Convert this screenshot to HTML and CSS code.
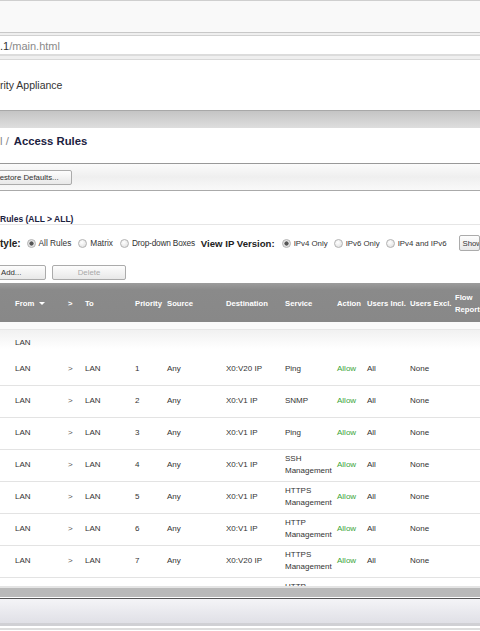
FILE: index.html
```html
<!DOCTYPE html>
<html lang="en">
<head>
    <meta charset="UTF-8">
    <meta name="viewport" content="width=device-width, initial-scale=1.0">
    <title>Access Rules</title>
    <link rel="stylesheet" href="styles.css">
</head>
<body>
    <div class="chrome"></div>
    <div class="address">
        <div class="url"><span class="host">.1</span>/main.html</div>
    </div>

    <div class="brand">rity Appliance</div>
    <div class="nav"></div>

    <div class="title"><span class="crumb">l /</span>Access Rules</div>

    <div class="toolbar">
        <button class="btn restore">Restore Defaults...</button>
    </div>

    <div class="section-head">Rules (ALL &gt; ALL)</div>

    <div class="view-row">
        <span class="view-label">tyle:</span>
        <label class="opt"><input type="radio" name="style" checked> All Rules</label>
        <label class="opt"><input type="radio" name="style"> Matrix</label>
        <label class="opt tight"><input type="radio" name="style"> Drop-down Boxes</label>
        <span class="view-label ip">View IP Version:</span>
        <label class="opt ipv"><input type="radio" name="ipv" checked> IPv4 Only</label>
        <label class="opt ipv"><input type="radio" name="ipv"> IPv6 Only</label>
        <label class="opt ipv"><input type="radio" name="ipv"> IPv4 and IPv6</label>
        <button class="btn show">Show Rules</button>
    </div>

    <div class="actions">
        <button class="btn add">Add...</button>
        <button class="btn delete" disabled>Delete</button>
    </div>

    <div class="tablewrap">
        <table class="rules">
            <colgroup>
                <col style="width:68px"><col style="width:17px"><col style="width:50px">
                <col style="width:32px"><col style="width:59px"><col style="width:59px">
                <col style="width:52px"><col style="width:30px"><col style="width:43px">
                <col style="width:45px"><col style="width:40px">
            </colgroup>
            <thead>
                <tr>
                    <th>From <span class="sort"></span></th>
                    <th>&gt;</th>
                    <th>To</th>
                    <th>Priority</th>
                    <th>Source</th>
                    <th>Destination</th>
                    <th>Service</th>
                    <th>Action</th>
                    <th>Users Incl.</th>
                    <th>Users Excl.</th>
                    <th>Flow<br>Report</th>
                </tr>
            </thead>
            <tbody>
                <tr class="group"><td colspan="11">LAN</td></tr>
                <tr><td>LAN</td><td class="arrow">&gt;</td><td>LAN</td><td>1</td><td>Any</td><td>X0:V20 IP</td><td>Ping</td><td class="allow">Allow</td><td>All</td><td>None</td><td></td></tr>
                <tr><td>LAN</td><td class="arrow">&gt;</td><td>LAN</td><td>2</td><td>Any</td><td>X0:V1 IP</td><td>SNMP</td><td class="allow">Allow</td><td>All</td><td>None</td><td></td></tr>
                <tr><td>LAN</td><td class="arrow">&gt;</td><td>LAN</td><td>3</td><td>Any</td><td>X0:V1 IP</td><td>Ping</td><td class="allow">Allow</td><td>All</td><td>None</td><td></td></tr>
                <tr><td>LAN</td><td class="arrow">&gt;</td><td>LAN</td><td>4</td><td>Any</td><td>X0:V1 IP</td><td>SSH<br>Management</td><td class="allow">Allow</td><td>All</td><td>None</td><td></td></tr>
                <tr><td>LAN</td><td class="arrow">&gt;</td><td>LAN</td><td>5</td><td>Any</td><td>X0:V1 IP</td><td>HTTPS<br>Management</td><td class="allow">Allow</td><td>All</td><td>None</td><td></td></tr>
                <tr><td>LAN</td><td class="arrow">&gt;</td><td>LAN</td><td>6</td><td>Any</td><td>X0:V1 IP</td><td>HTTP<br>Management</td><td class="allow">Allow</td><td>All</td><td>None</td><td></td></tr>
                <tr><td>LAN</td><td class="arrow">&gt;</td><td>LAN</td><td>7</td><td>Any</td><td>X0:V20 IP</td><td>HTTPS<br>Management</td><td class="allow">Allow</td><td>All</td><td>None</td><td></td></tr>
                <tr><td>LAN</td><td class="arrow">&gt;</td><td>LAN</td><td>8</td><td>Any</td><td>X0:V20 IP</td><td>HTTP<br>Management</td><td class="allow">Allow</td><td>All</td><td>None</td><td></td></tr>
            </tbody>
        </table>
    </div>

    <div class="hscroll"></div>
    <div class="footer"></div>
    <div class="footer-end"></div>
</body>
</html>
```

FILE: styles.css
```css
* {
    box-sizing: border-box;
}
body {
    margin: 0;
    width: 480px;
    height: 631px;
    overflow: hidden;
    font-family: "Liberation Sans", Arial, sans-serif;
    color: #333;
    background: #fff;
}

/* browser chrome */
.chrome {
    height: 32px;
    background: #f9f9f9;
    border-top: 1px solid #cfcfcf;
}
.address {
    background: #efefef;
    border-top: 1px solid #c8c8c8;
    border-bottom: 1px solid #d8d8d8;
    padding: 2px 0 3px;
}
.url {
    height: 21px;
    background: #fff;
    border-top: 1px solid #d2d2d2;
    border-bottom: 2px solid #dcdcdc;
    font-size: 11px;
    line-height: 20px;
    color: #8a8a8a;
    white-space: nowrap;
}
.host {
    color: #333;
}

/* page header */
.brand {
    height: 50px;
    line-height: 50px;
    font-size: 10.5px;
    color: #333;
}
.nav {
    height: 18px;
    border-top: 1px solid #a8a8a8;
    background: linear-gradient(#c4c4c4, #dedede);
}
.title {
    height: 35px;
    line-height: 27px;
    font-size: 11.3px;
    font-weight: bold;
    color: #1b2140;
}
.crumb {
    font-weight: normal;
    color: #888;
    margin-right: 5px;
}
.toolbar {
    height: 28px;
    border-top: 1px solid #999;
    border-bottom: 1px solid #aaa;
    background: linear-gradient(#fbfbfb, #efefef 50%, #f9f9f9);
    padding-top: 6px;
}

/* buttons */
.btn {
    display: block;
    height: 15px;
    padding: 0;
    font-family: "Liberation Sans", Arial, sans-serif;
    font-size: 7.8px;
    color: #333;
    border: 1px solid #ababab;
    border-radius: 2px;
    background: linear-gradient(#fdfdfd, #e8e8e8);
    white-space: nowrap;
    overflow: hidden;
}
.restore {
    width: 82px;
    margin-left: -10px;
    text-align: left;
    padding-left: 3px;
}

/* rules section */
.section-head {
    height: 34px;
    padding-top: 22px;
    line-height: 12px;
    font-size: 8.5px;
    font-weight: bold;
    color: #1b2140;
    border-bottom: 1px solid #e6e6e6;
}
.view-row {
    height: 36px;
    display: flex;
    align-items: center;
    white-space: nowrap;
}
.view-label {
    font-size: 10px;
    font-weight: bold;
    color: #222;
    margin-right: 6px;
}
.view-label.ip {
    font-size: 9.6px;
    margin-left: -1px;
    margin-right: 7px;
}
.opt {
    display: flex;
    align-items: center;
    font-size: 8.3px;
    color: #333;
    margin-right: 7px;
}
.opt.tight {
    letter-spacing: -0.2px;
}
.opt.ipv {
    font-size: 7.85px;
    margin-right: 6px;
}
.opt input {
    appearance: none;
    -webkit-appearance: none;
    width: 9px;
    height: 9px;
    margin: 0 3px 0 0;
    border: 1px solid #b2b2b2;
    border-radius: 50%;
    background: radial-gradient(circle at 40% 35%, #fff, #dcdcdc);
}
.opt input:checked {
    background: radial-gradient(circle, #555 0 1.8px, #e4e4e4 2.4px);
}
.show {
    width: 60px;
    margin-left: 6px;
    text-align: left;
    padding-left: 3px;
    height: 16px;
}
.actions {
    height: 22px;
    padding-top: 4px;
    display: flex;
    gap: 6px;
}
.add {
    width: 54px;
    margin-left: -8px;
    text-align: left;
    padding-left: 8px;
}
.delete {
    width: 74px;
    color: #a8a8a8;
}

/* rules table */
.tablewrap {
    height: 303px;
    overflow: hidden;
}
.rules {
    width: 495px;
    table-layout: fixed;
    border-collapse: collapse;
    font-size: 8px;
    line-height: 12px;
}
.rules th {
    height: 39px;
    padding: 3px 0 0;
    text-align: left;
    color: #fff;
    font-size: 7.7px;
    font-weight: bold;
    background: linear-gradient(#9c9c9c, #8a8a8a 18%, #888);
    vertical-align: middle;
    white-space: nowrap;
}
.rules th:first-child,
.rules td:first-child {
    padding-left: 15px;
}
.sort {
    display: inline-block;
    margin-left: 3px;
    border-left: 3px solid transparent;
    border-right: 3px solid transparent;
    border-top: 3px solid #fff;
    vertical-align: 1px;
}
.rules td {
    height: 32px;
    padding: 0;
    color: #333;
    border-bottom: 1px solid #e3e3e3;
    vertical-align: middle;
    white-space: nowrap;
}
.rules tr.group td {
    height: 31px;
    border-bottom: none;
    padding-top: 10px;
    background: linear-gradient(#fbfbfb 0 7px, #e8e8e8 7px 8px, #f1f1f1 8px, #fff 27px);
}
.rules td.arrow {
    color: #555;
}
.rules td.allow {
    color: #3aa53a;
}

/* bottom scroll bar and frame */
.hscroll {
    height: 12px;
    border-top: 2px solid #e4e4e4;
    border-bottom: 1px solid #fff;
    background: #b9b9b9;
}
.footer {
    height: 28px;
    border-top: 1px solid #555;
    border-bottom: 3px solid #d0d0d4;
    background: linear-gradient(#f4f4f7, #e0e0e6);
}
.footer-end {
    height: 4px;
    border-bottom: 2px solid #ddd;
}
```
